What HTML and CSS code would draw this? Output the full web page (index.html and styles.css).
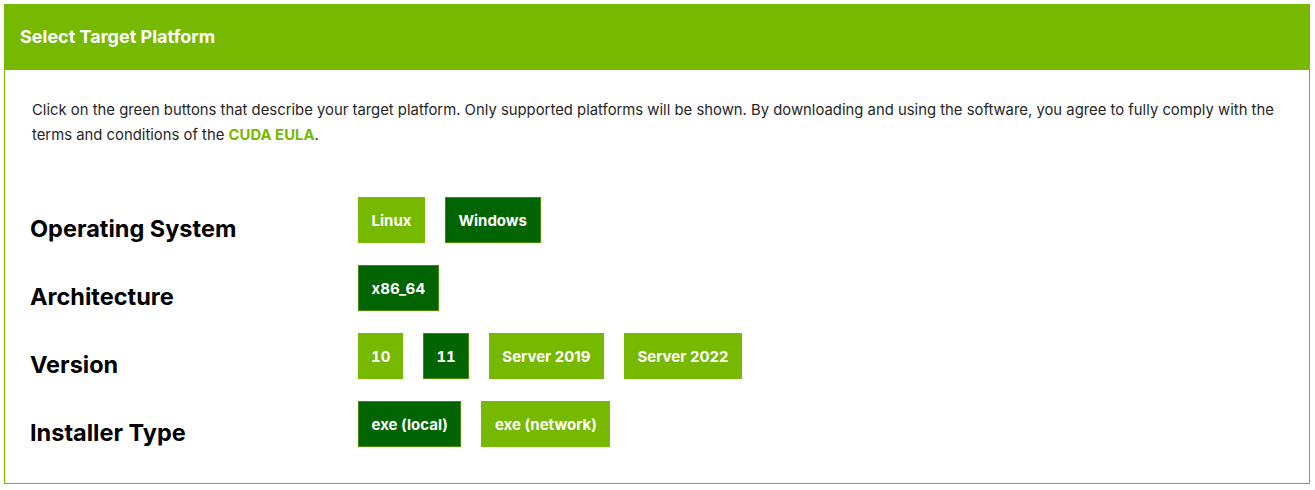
FILE: index.html
```html
<!DOCTYPE html>
<html lang="en">
<head>
<meta charset="utf-8">
<title>Select Target Platform</title>
<link rel="stylesheet" href="styles.css">
</head>
<body>
<section class="panel">
  <header class="panel-head">Select Target Platform</header>
  <div class="panel-body">
    <p class="intro">Click on the green buttons that describe your target platform. Only supported platforms will be shown. By downloading and using the software, you agree to fully comply with the terms and conditions of the <a class="eula" href="#">CUDA EULA</a>.</p>
    <div class="selector">
      <div class="row">
        <div class="label">Operating System</div>
        <div class="options">
          <span class="btn">Linux</span>
          <span class="btn active">Windows</span>
        </div>
      </div>
      <div class="row">
        <div class="label">Architecture</div>
        <div class="options">
          <span class="btn active">x86_64</span>
        </div>
      </div>
      <div class="row">
        <div class="label">Version</div>
        <div class="options">
          <span class="btn num">10</span>
          <span class="btn num active">11</span>
          <span class="btn">Server 2019</span>
          <span class="btn">Server 2022</span>
        </div>
      </div>
      <div class="row">
        <div class="label">Installer Type</div>
        <div class="options">
          <span class="btn active">exe (local)</span>
          <span class="btn">exe (network)</span>
        </div>
      </div>
    </div>
  </div>
</section>
</body>
</html>
```
FILE: styles.css
```css
html, body {
  margin: 0;
  padding: 0;
  background: #ffffff;
}
body {
  padding: 4px 5px 6px 4px;
  font-family: Inter, "Liberation Sans", sans-serif;
  color: #1a1a1a;
}
.panel {
  border: 1px solid #76b900;
  border-top: none;
}
.panel-head {
  background: #76b900;
  color: #ffffff;
  font-weight: 700;
  font-size: 18px;
  height: 66px;
  line-height: 66px;
  margin: 0 -1px;
  padding-left: 16px;
}
.panel-body {
  padding: 28px 27px 36px 27px;
}
.intro {
  margin: 0;
  font-size: 14.85px;
  line-height: 25px;
  color: #262626;
}
.eula {
  color: #76b900;
  font-weight: 700;
  text-decoration: none;
}
.selector {
  margin-top: 49px;
  margin-left: -2px;
  display: flex;
  flex-direction: column;
  gap: 22px;
}
.row {
  display: grid;
  grid-template-columns: 328px 1fr;
  align-items: end;
}
.label {
  font-size: 23.5px;
  font-weight: 700;
  color: #000000;
  line-height: 28px;
  margin-bottom: 0;
}
.options {
  display: flex;
  gap: 20px;
}
.btn {
  display: inline-flex;
  align-items: center;
  height: 46px;
  box-sizing: border-box;
  padding: 0 12.5px;
  background: #76b900;
  border: 1px solid #76b900;
  color: #ffffff;
  font-weight: 700;
  font-size: 15px;
}
.btn.num {
  font-variant-numeric: tabular-nums;
  padding: 0 12px;
}
.btn.active {
  background: #006400;
  border-color: #4a8a00;
}
```
